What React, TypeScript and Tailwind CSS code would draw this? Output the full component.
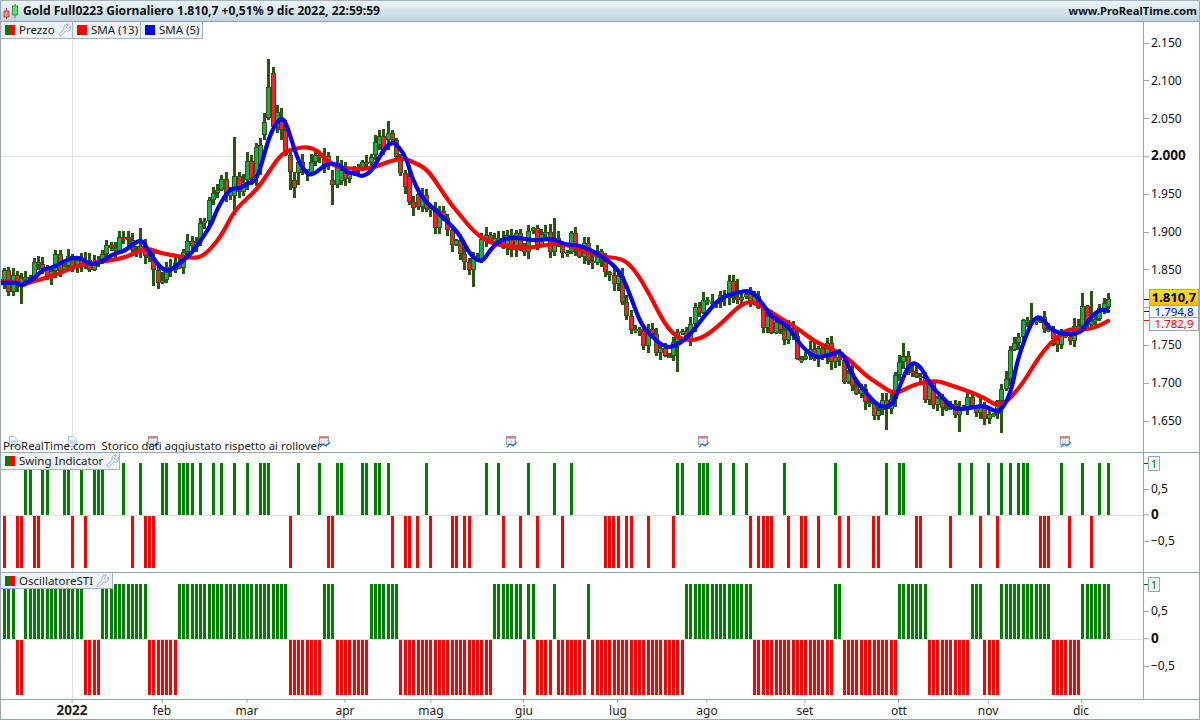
import { Wrench } from "lucide-react";
import type { ReactNode } from "react";

// [x, y] in page pixels, read off the chart
const BLUE: number[][] = [
  [2, 283], [17, 282], [21, 286], [27, 282], [35, 278], [43, 269], [52, 268], [68, 259], [80, 257], [88, 264],
  [98, 264], [113, 254], [125, 251], [141, 238], [148, 250], [158, 265], [167, 272], [175, 267], [190, 255],
  [200, 242], [212, 223], [217, 209], [230, 188], [240, 189], [247, 183], [257, 181], [268, 140], [275, 125],
  [281, 118], [286, 122], [297, 158], [305, 172], [312, 176], [327, 163], [340, 165], [347, 173], [355, 173],
  [362, 177], [372, 171], [382, 152], [392, 141], [400, 148], [407, 160], [412, 178], [422, 198], [433, 208],
  [448, 222], [460, 235], [470, 255], [482, 263], [490, 250], [500, 240], [515, 237], [535, 241], [552, 238],
  [565, 245], [580, 245], [600, 255], [620, 270], [632, 300], [640, 322], [650, 335], [665, 348], [678, 345],
  [690, 335], [705, 315], [720, 298], [735, 293], [750, 290], [760, 300], [772, 318], [788, 325], [800, 345],
  [815, 358], [830, 355], [842, 350], [852, 375], [865, 392], [880, 408], [893, 405], [900, 385], [910, 362],
  [920, 365], [930, 385], [945, 400], [955, 410], [970, 408], [985, 405], [997, 413], [1005, 405], [1012, 388],
  [1018, 357], [1033, 318], [1042, 317], [1053, 333], [1080, 335], [1088, 320], [1100, 309], [1108, 311],
];

const RED: number[][] = [
  [2, 281], [17, 282], [21, 286], [30, 282], [50, 277], [72, 268], [87, 263], [107, 261], [123, 258], [133, 254],
  [147, 248], [157, 252], [170, 255], [197, 259], [208, 252], [222, 235], [235, 209], [257, 190], [270, 170],
  [282, 153], [297, 148], [307, 147], [317, 150], [328, 162], [340, 168], [360, 169], [373, 168], [387, 162],
  [403, 158], [413, 162], [427, 169], [440, 188], [450, 203], [460, 215], [475, 233], [490, 243], [505, 246],
  [530, 248], [545, 245], [560, 243], [580, 249], [600, 257], [622, 258], [635, 270], [650, 295], [665, 325],
  [680, 340], [700, 340], [720, 325], [745, 300], [760, 305], [780, 318], [800, 330], [815, 342], [830, 348],
  [848, 358], [865, 375], [880, 385], [895, 395], [912, 385], [935, 380], [950, 385], [965, 390], [985, 398],
  [1000, 408], [1020, 388], [1037, 360], [1050, 343], [1067, 329], [1080, 330], [1095, 328], [1108, 321],
];

// candles worth placing by hand: x, high, low, open, close
const CANDLES: number[][] = [
  [234, 137, 215, 196, 176], [247, 152, 190, 180, 161], [252, 155, 185, 161, 178], [260, 138, 175, 165, 145],
  [263, 113, 140, 135, 122], [268, 59, 120, 118, 87], [273, 67, 130, 73, 127], [281, 108, 140, 120, 130],
  [285, 120, 156, 130, 155], [290, 152, 190, 155, 172], [294, 172, 198, 180, 188], [298, 158, 185, 173, 162],
  [332, 170, 205, 180, 185], [340, 160, 185, 181, 170], [375, 135, 160, 155, 142], [380, 130, 150, 145, 136],
  [388, 121, 150, 140, 133], [410, 165, 205, 176, 202], [417, 188, 210, 194, 207], [1104, 298, 314, 310, 303],
  [1108, 293, 309, 307, 299],
];

// wicks that stick out of the band: x, high, low (0 = leave it)
const WICKS: number[][] = [
  [20, 0, 304], [140, 228, 0], [155, 0, 286], [473, 0, 287], [555, 218, 0], [678, 0, 372], [737, 279, 0],
  [885, 0, 430], [905, 343, 0], [960, 0, 432], [1000, 0, 433], [1030, 303, 0], [1082, 293, 0], [1090, 291, 0],
];

const SWING_UP = [
  25.6, 30.6, 42.5, 47.5, 64.7, 68.5, 81.5, 94.5, 98.7, 102.6, 123.6, 140.5, 162.6, 166.5, 179.5, 183.7, 187.9,
  192.1, 200.5, 213.5, 221.6, 234.6, 247.6, 260.6, 264.4, 268.7, 298.5, 319.6, 337.5, 341.4, 362.4, 366.6, 375.4,
  379.6, 388.4, 426.7, 486.4, 498.7, 528.5, 554.5, 571.6, 677.4, 682.6, 699.6, 703.3, 707.5, 720.7, 733.4, 746.6,
  784.6, 835.4, 886.6, 899.4, 903.5, 959.5, 971.6, 988.5, 1001.3, 1010.3, 1018.6, 1023.5, 1027.3, 1061.5, 1082.6,
  1099.5, 1108.5,
];

const SWING_DOWN = [
  4.6, 17.6, 21.4, 34.4, 38.7, 72.7, 85.7, 132.4, 145.4, 149.6, 153.5, 290.5, 328.7, 332.6, 392.6, 405.7, 409.5,
  417.5, 430.5, 452.7, 456.6, 464.6, 469.6, 503.6, 520.5, 537.7, 562.6, 605.5, 609.7, 613.4, 618.3, 626.6, 631.5,
  648.4, 673.6, 750.4, 758.6, 763.5, 767.3, 771.4, 788.4, 801.5, 805.3, 818.5, 839.5, 848.6, 873.4, 878.3, 916.3,
  920.4, 950.5, 980.6, 997.6, 1040.4, 1044.6, 1048.3, 1069.4, 1091.6,
];

// [first slot, last slot] of each run
const OSC_UP = [
  [0, 2], [5, 18], [23, 33], [41, 66], [75, 77], [86, 92], [115, 121], [123, 124], [129, 129], [137, 137],
  [160, 175], [195, 196], [210, 216], [227, 229], [234, 245], [253, 259],
];
const OSC_DOWN = [
  [3, 4], [19, 22], [34, 40], [67, 74], [78, 85], [93, 114], [122, 122], [125, 128], [130, 136], [138, 159],
  [176, 194], [197, 209], [217, 226], [230, 233], [246, 252],
];

const PRICES = ["2.150", "2.100", "2.050", "2.000", "1.950", "1.900", "1.850", "1.800", "1.750", "1.700", "1.650"];
const MONTHS = [
  ["2022", 72], ["feb", 162], ["mar", 247], ["apr", 345], ["mag", 431], ["giu", 524],
  ["lug", 618], ["ago", 707], ["set", 805], ["ott", 899], ["nov", 988], ["dic", 1081],
] as const;

const slotX = (n: number) => 4.6 + n * 4.262;

const rnd = (i: number) => {
  const s = Math.sin(i * 12.9898) * 43758.5453;
  return s - Math.floor(s);
};

const lineAt = (pts: number[][], x: number) => {
  if (x <= pts[0][0]) return pts[0][1];
  for (let i = 1; i < pts.length; i++) {
    if (x <= pts[i][0]) {
      const t = (x - pts[i - 1][0]) / (pts[i][0] - pts[i - 1][0]);
      return pts[i - 1][1] + (pts[i][1] - pts[i - 1][1]) * t;
    }
  }
  return pts[pts.length - 1][1];
};

const buildCandles = () => {
  const out: { x: number; hi: number; lo: number; open: number; close: number }[] = [];
  let prev = lineAt(BLUE, 4);
  for (let n = 0; n < 260; n++) {
    const c = slotX(n);
    const close = lineAt(BLUE, c + 8) + (rnd(n) - 0.5) * 24;
    const manual = CANDLES.find((k) => Math.abs(k[0] - c) < 2.14);
    const candle = manual
      ? { x: c, hi: manual[1], lo: manual[2], open: manual[3], close: manual[4] }
      : {
          x: c,
          hi: Math.min(prev, close) - 1 - rnd(n + 300) * 7,
          lo: Math.max(prev, close) + 1 + rnd(n + 600) * 7,
          open: prev,
          close,
        };
    const wick = WICKS.find((k) => Math.abs(k[0] - c) < 2.14);
    if (wick && wick[1]) candle.hi = wick[1];
    if (wick && wick[2]) candle.lo = wick[2];
    out.push(candle);
    prev = candle.close;
  }
  return out;
};

// smooth the read-off points with quadratics through the midpoints
const toPath = (pts: number[][]) => {
  let d = `M${pts[0][0]} ${pts[0][1]}`;
  for (let i = 1; i < pts.length - 1; i++) {
    const mx = (pts[i][0] + pts[i + 1][0]) / 2;
    const my = (pts[i][1] + pts[i + 1][1]) / 2;
    d += ` Q${pts[i][0]} ${pts[i][1]} ${mx} ${my}`;
  }
  const last = pts[pts.length - 1];
  return `${d} L${last[0]} ${last[1]}`;
};

const Legend = ({ label, color, tool, width }: { label: string; color?: string; tool?: boolean; width: string }) => (
  <div className={`flex h-full items-center gap-[3px] border-r border-b border-[#a5b3bd] bg-[#eef2f5] pl-[4px] text-[11.5px] text-[#222] ${width}`}>
    {color ? (
      <div className="mr-px h-[10px] w-[10px] shrink-0" style={{ backgroundColor: color }} />
    ) : (
      <div className="mr-px flex h-[10px] w-[10px] shrink-0">
        <div className="w-1/2 bg-[#008000]" />
        <div className="w-1/2 bg-[#ff0000]" />
      </div>
    )}
    <span className="whitespace-nowrap">{label}</span>
    {tool && <Wrench size={14} strokeWidth={1.1} className="shrink-0 text-[#6f93b5]" />}
  </div>
);

const Tick = ({ y, label, bold }: { y: number; label: string; bold?: boolean }) => (
  <div className="absolute left-0 flex -translate-y-1/2 items-center" style={{ top: y }}>
    <div className="h-px w-[5px] bg-[#9aa8b2]" />
    <span className={`ml-[2px] leading-none text-[#111] ${bold ? "text-[13.5px] font-bold" : "text-[12px]"}`}>
      {label}
    </span>
  </div>
);

const ValueFlag = ({ y }: { y: number }) => (
  <>
    <div className="absolute left-0 h-px w-[5px] bg-[#006400]" style={{ top: y }} />
    <div
      className="absolute left-[4px] flex h-[15px] w-[12px] items-center justify-center border border-[#9aa8b2] bg-[#f2f2f2] text-[11.5px] leading-none text-[#008000]"
      style={{ top: y - 7 }}
    >
      1
    </div>
  </>
);

const Pane = ({ height, chart, axis, legend }: { height: number; chart: ReactNode; axis: ReactNode; legend: ReactNode }) => (
  <div className="flex shrink-0" style={{ height }}>
    <div className="relative w-[1142px] shrink-0">
      {chart}
      {legend}
    </div>
    <div className="relative flex-1 border-l border-[#9aa8b2]">{axis}</div>
  </div>
);

const Bars = ({ xs, top, height, fill }: { xs: number[]; top: number; height: number; fill: string }) => (
  <>
    {xs.map((c) => (
      <rect key={c} x={Math.round(c - 1.5)} y={top} width="3" height={height} fill={fill} />
    ))}
  </>
);

const runsToX = (runs: number[][]) =>
  runs.flatMap(([a, b]) => Array.from({ length: b - a + 1 }, (_, i) => slotX(a + i)));

const DocIcon = ({ x }: { x: number }) => (
  <g transform={`translate(${x} 436)`} fill="none" stroke="#a9c3e4" strokeWidth="1">
    <path d="M.5.5h5l3 3v7h-8z" fill="#eef4fb" />
    <path d="M2 5h5M2 7h5" />
  </g>
);

const CalendarIcon = ({ x }: { x: number }) => (
  <g transform={`translate(${x} 436)`} fill="none">
    <rect x=".5" y=".5" width="9" height="8" fill="#eef2f8" stroke="#8fa9c9" />
    <rect x=".5" y=".5" width="9" height="2" fill="#d8806f" />
    <path d="M2 5h1M5 5h1M8 5h1M2 7h1M5 7h1" stroke="#a3b8d4" />
    <path d="M1 11l3-3 3 2 4-4" stroke="#2f6fd0" strokeWidth="1.2" />
  </g>
);

export default function App() {
  const candles = buildCandles();
  return (
    <div className="flex h-[720px] w-[1200px] flex-col overflow-hidden border-x border-b border-[#9aa8b2] bg-white font-['Noto_Sans',sans-serif]">
      <div className="flex h-[22px] shrink-0 items-center justify-between border-y border-b-[#8f9ea8] border-t-[#a5b3bd] bg-gradient-to-b from-[#ecf6fb] to-[#bfd4df] px-[2px] font-bold text-[#111]">
        <div className="flex items-center gap-[4px]">
          <svg width="16" height="16" viewBox="0 0 16 16">
            <path d="M3.5 5v11" stroke="#a33" />
            <rect x="1" y="8" width="5" height="6" fill="#f08a8a" stroke="#a33" strokeWidth=".8" />
            <path d="M12 1v14" stroke="#283" />
            <rect x="9.5" y="3" width="5" height="9" fill="#5fe06a" stroke="#283" strokeWidth=".8" />
          </svg>
          <span className="text-[12.1px]">Gold Full0223 Giornaliero 1.810,7 +0,51% 9 dic 2022, 22:59:59</span>
        </div>
        <span className="text-[11.2px]">www.ProRealTime.com</span>
      </div>

      <Pane
        height={430}
        chart={
          <svg width="1142" height="430" viewBox="1 22 1142 430" className="block">
            <rect x="1" y="156" width="1142" height="1" fill="#e6e6ee" />
            <rect x="72" y="38" width="1" height="414" fill="#e2e4ec" />
            {candles.map((c, i) => {
              const x = Math.round(c.x - 1.5);
              const top = Math.min(c.open, c.close);
              const h = Math.max(Math.abs(c.open - c.close), 2);
              return (
                <g key={i} shapeRendering="crispEdges">
                  <rect x={x} y={c.hi} width="3" height={c.lo - c.hi} fill="#2b5510" />
                  <rect x={x - 1} y={top} width="5" height={h} fill="#2b5510" />
                  <rect x={x} y={top + 1} width="3" height={Math.max(h - 2, 1)} fill={c.close < c.open ? "#20a84a" : "#f5222a"} />
                </g>
              );
            })}
            <path d={toPath(RED)} fill="none" stroke="#ff0000" strokeWidth="4.2" strokeLinejoin="round" strokeLinecap="round" />
            <path d={toPath(BLUE)} fill="none" stroke="#0000ff" strokeWidth="4.2" strokeLinejoin="round" strokeLinecap="round" />
            {[9, 68].map((x) => (
              <DocIcon key={x} x={x} />
            ))}
            {[148, 319, 506, 698, 1060].map((x) => (
              <CalendarIcon key={x} x={x} />
            ))}
          </svg>
        }
        legend={
          <>
            <div className="absolute top-0 left-0 flex h-[17px]">
              <Legend label="Prezzo" tool width="w-[72px]" />
              <Legend label="SMA (13)" color="#ff0000" width="w-[68px]" />
              <Legend label="SMA (5)" color="#0000ff" width="w-[62px]" />
            </div>
            <div className="absolute top-[418px] left-[2px] whitespace-nowrap text-[11.3px] leading-[12px] text-[#222]">
              ProRealTime.com&nbsp; Storico dati aggiustato rispetto ai rollover
            </div>
          </>
        }
        axis={
          <>
            {PRICES.map((p, i) => (
              <Tick key={p} y={21 + i * 37.8} label={p} bold={p === "2.000"} />
            ))}
            <div className="absolute left-0 top-[277px] h-px w-[5px] bg-black" />
            <div className="absolute left-0 top-[289px] h-px w-[5px] bg-[#0000ff]" />
            <div className="absolute left-0 top-[298px] h-px w-[5px] bg-[#ff0000]" />
            <div className="absolute top-[267px] left-[5px] flex h-[17px] w-[50px] items-center justify-center border border-[#9aa8b2] bg-gradient-to-b from-[#ffdf30] to-[#f0bd10] text-[13px] leading-none font-bold text-black">
              1.810,7
            </div>
            <div className="absolute top-[284px] left-[5px] flex h-[11px] w-[50px] items-center justify-center border-x border-[#9aa8b2] bg-[#f5f5f5] text-[11.5px] leading-none text-[#0000ff]">
              1.794,8
            </div>
            <div className="absolute top-[295px] left-[5px] flex h-[14px] w-[50px] items-center justify-center border border-[#9aa8b2] bg-[#f5f5f5] text-[11.5px] leading-none text-[#ff0000]">
              1.782,9
            </div>
          </>
        }
      />

      <Pane
        height={120}
        chart={
          <svg width="1142" height="120" viewBox="1 452 1142 120" className="block">
            <rect x="1" y="452" width="1142" height="1" fill="#9aa8b2" />
            <rect x="72" y="453" width="1" height="119" fill="#e2e4ec" />
            <rect x="1" y="515" width="1142" height="1" fill="#e0e0e8" />
            <Bars xs={SWING_UP} top={463} height={52} fill="#008000" />
            <Bars xs={SWING_DOWN} top={516} height={52} fill="#ff0000" />
          </svg>
        }
        legend={
          <div className="absolute top-px left-0 flex h-[17px]">
            <Legend label="Swing Indicator" tool width="w-[119px]" />
          </div>
        }
        axis={
          <>
            <div className="absolute inset-x-0 top-0 h-px bg-[#9aa8b2]" />
            <ValueFlag y={11} />
            <Tick y={37} label="0,5" />
            <Tick y={63} label="0" bold />
            <Tick y={89} label="−0,5" />
          </>
        }
      />

      <Pane
        height={127}
        chart={
          <svg width="1142" height="127" viewBox="1 572 1142 127" className="block">
            <rect x="1" y="572" width="1142" height="1" fill="#9aa8b2" />
            <rect x="72" y="573" width="1" height="126" fill="#e2e4ec" />
            <rect x="1" y="639" width="1142" height="1" fill="#e0e0e8" />
            <Bars xs={runsToX(OSC_UP)} top={584} height={55} fill="#008000" />
            <Bars xs={runsToX(OSC_DOWN)} top={640} height={55} fill="#ff0000" />
          </svg>
        }
        legend={
          <div className="absolute top-px left-0 flex h-[16px]">
            <Legend label="OscillatoreSTI" tool width="w-[112px]" />
          </div>
        }
        axis={
          <>
            <div className="absolute inset-x-0 top-0 h-px bg-[#9aa8b2]" />
            <ValueFlag y={12} />
            <Tick y={39} label="0,5" />
            <Tick y={67} label="0" bold />
            <Tick y={94} label="−0,5" />
          </>
        }
      />

      <div className="relative flex-1 border-t border-[#9aa8b2]">
        {MONTHS.map(([label, x]) => (
          <div key={label} className="absolute top-0 flex -translate-x-1/2 flex-col items-center" style={{ left: x - 1 }}>
            <div className="h-[3px] w-px bg-[#9aa8b2]" />
            <span className={`leading-none text-[#222] ${label === "2022" ? "mt-[1px] text-[13.5px] font-bold" : "mt-[2px] text-[12px]"}`}>
              {label}
            </span>
          </div>
        ))}
      </div>
    </div>
  );
}
